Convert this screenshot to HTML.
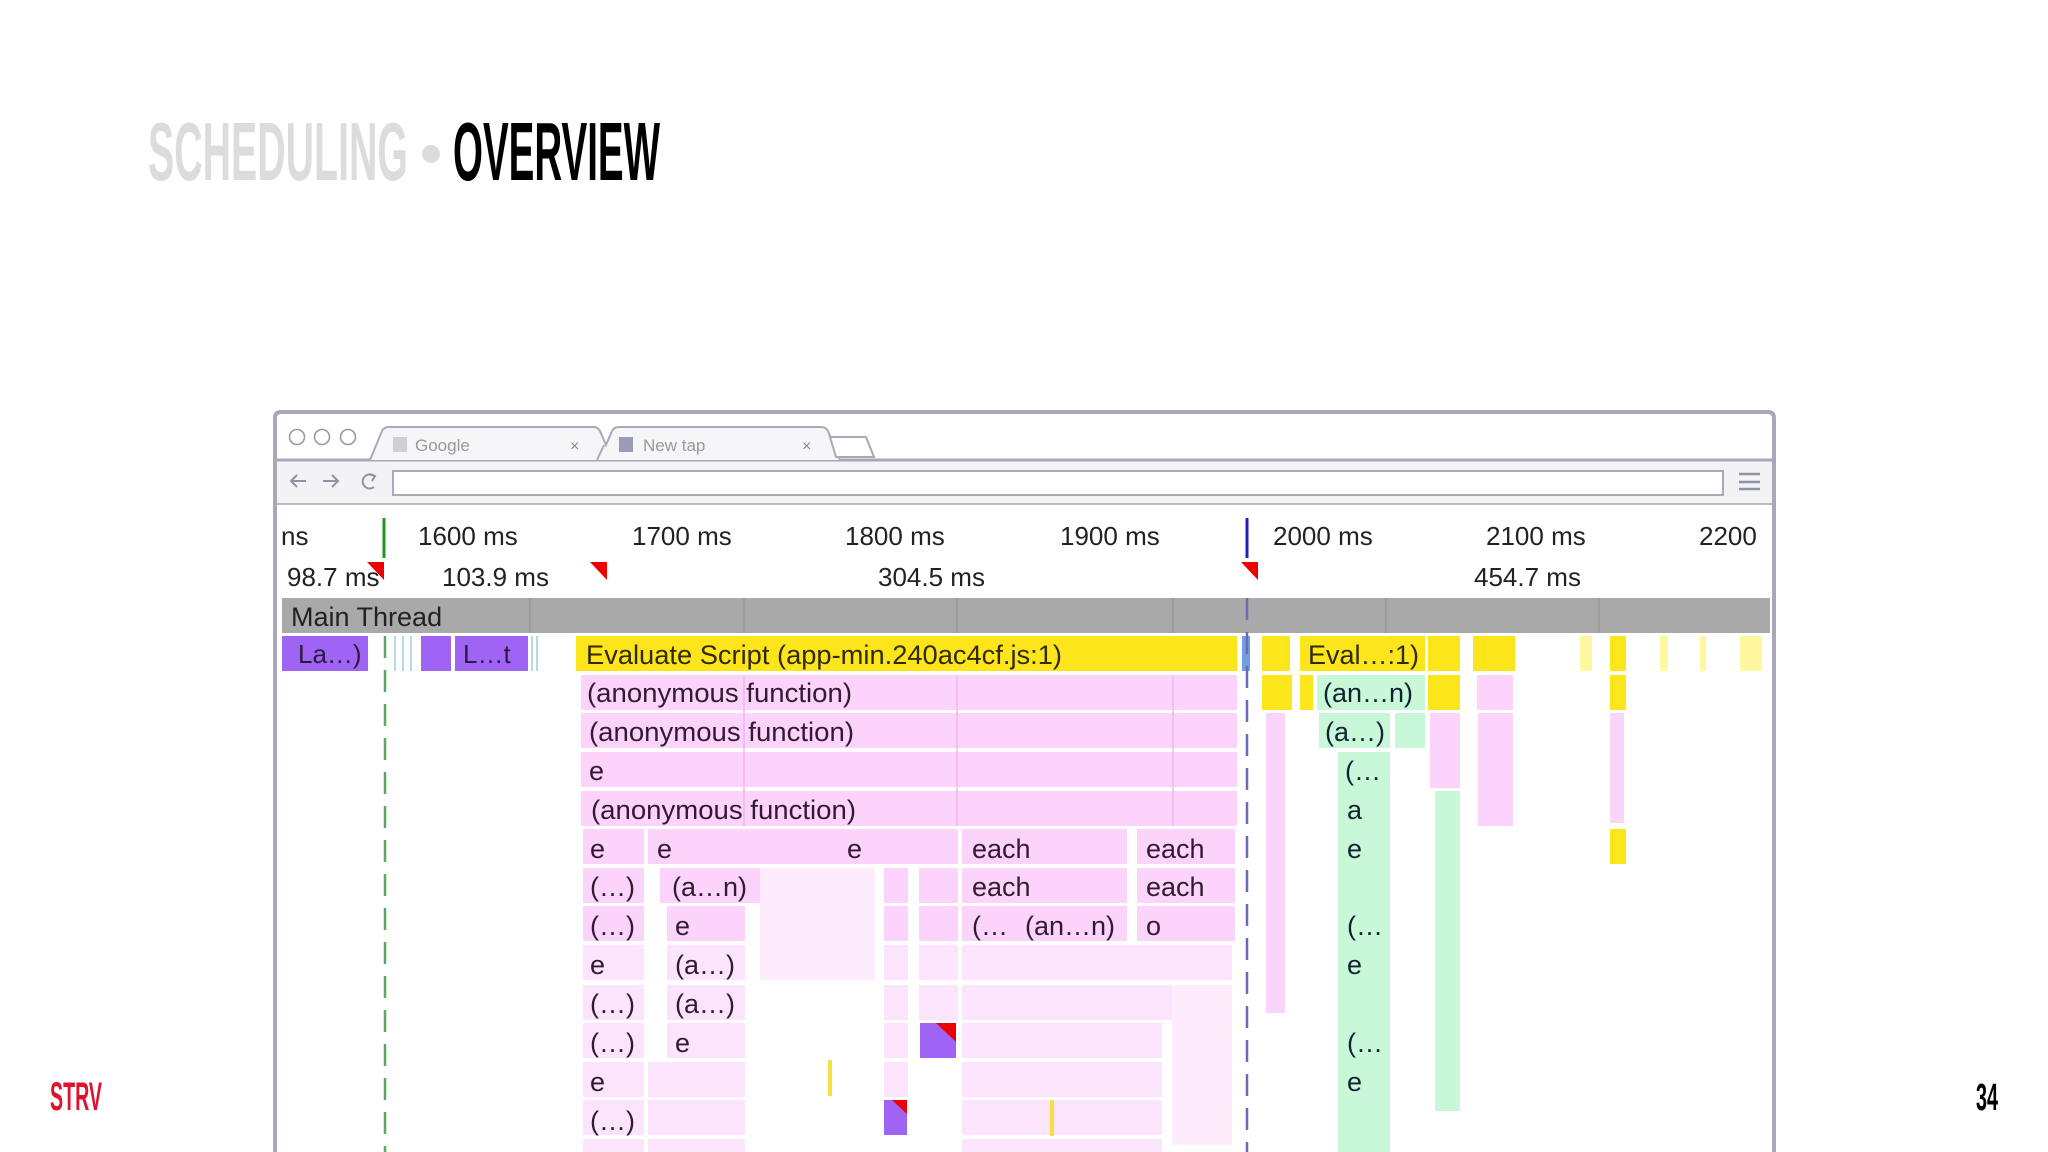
<!DOCTYPE html>
<html><head><meta charset="utf-8"><style>
html,body{margin:0;padding:0;background:#fff;width:2048px;height:1152px;overflow:hidden}
svg{display:block}
text{font-family:"Liberation Sans",sans-serif}
</style></head><body>
<svg width="2048" height="1152" viewBox="0 0 2048 1152" xmlns="http://www.w3.org/2000/svg">
<!-- Title -->
<text x="148" y="180" font-size="83" font-weight="bold" fill="#dcdcdc" textLength="260" lengthAdjust="spacingAndGlyphs" style="font-family:'Liberation Sans Narrow','Liberation Sans',sans-serif">SCHEDULING</text>
<circle cx="431" cy="154" r="9" fill="#dcdcdc"/>
<text x="453" y="180" font-size="83" font-weight="bold" fill="#000" textLength="207" lengthAdjust="spacingAndGlyphs" style="font-family:'Liberation Sans Narrow','Liberation Sans',sans-serif">OVERVIEW</text>
<text x="50" y="1110" font-size="40" font-weight="bold" fill="#e0102f" textLength="52" lengthAdjust="spacingAndGlyphs">STRV</text>
<text x="1976" y="1110" font-size="38" font-weight="bold" fill="#000" textLength="22" lengthAdjust="spacingAndGlyphs">34</text>

<!-- Browser -->
<path d="M275 1152 V418 Q275 412 281 412 H1768 Q1774 412 1774 418 V1152" fill="#fff" stroke="#a7a9b8" stroke-width="4"/>
<rect x="277" y="460" width="1495" height="43" fill="#f3f3f5"/>
<line x1="277" y1="460" x2="1772" y2="460" stroke="#a7a9b8" stroke-width="3"/>
<line x1="277" y1="504" x2="1772" y2="504" stroke="#b8bac6" stroke-width="2"/>
<circle cx="297" cy="437" r="7.5" fill="none" stroke="#9a9a9a" stroke-width="1.6"/>
<circle cx="322" cy="437" r="7.5" fill="none" stroke="#9a9a9a" stroke-width="1.6"/>
<circle cx="348" cy="437" r="7.5" fill="none" stroke="#9a9a9a" stroke-width="1.6"/>
<path d="M370 460 L382 431 Q384 427 389 427 H593 Q598 427 600 431 L606 445 L612 431 Q614 427 619 427 H821 Q826 427 828 431 L840 460" fill="#f6f6f8" stroke="#a7a9b8" stroke-width="2"/>
<path d="M604 445 L597 460" stroke="#a7a9b8" stroke-width="2" fill="none"/>
<path d="M836 457 L830 437 H866 L874 457 Z" fill="#fff" stroke="#a7a9b8" stroke-width="2"/>
<rect x="393" y="437" width="14" height="15" fill="#cfcfd4"/>
<text x="415" y="451" font-size="17" fill="#999">Google</text>
<text x="570" y="451" font-size="16" fill="#888">×</text>
<rect x="619" y="437" width="14" height="15" fill="#9a9cb5"/>
<text x="643" y="451" font-size="17" fill="#999">New tap</text>
<text x="802" y="451" font-size="16" fill="#888">×</text>
<g stroke="#8f92a6" stroke-width="2" fill="none">
<path d="M306 481 H291 M297 475 L291 481 L297 487"/>
<path d="M323 481 H338 M332 475 L338 481 L332 487"/>
<path d="M374 476 A7 7 0 1 0 374 487"/><path d="M370 474 L375 476 L372 481"/>
</g>
<rect x="393" y="471" width="1330" height="24" fill="#fff" stroke="#a9abb8" stroke-width="2"/>
<g stroke="#8f92a6" stroke-width="2.5"><line x1="1739" y1="474" x2="1760" y2="474"/><line x1="1739" y1="482" x2="1760" y2="482"/><line x1="1739" y1="489" x2="1760" y2="489"/></g>

<!-- Ruler -->
<g font-size="26" fill="#222">
<text x="281" y="545">ns</text>
<text x="418" y="545">1600 ms</text>
<text x="632" y="545">1700 ms</text>
<text x="845" y="545">1800 ms</text>
<text x="1060" y="545">1900 ms</text>
<text x="1273" y="545">2000 ms</text>
<text x="1486" y="545">2100 ms</text>
<text x="1699" y="545">2200</text>
<text x="287" y="586">98.7 ms</text>
<text x="442" y="586">103.9 ms</text>
<text x="878" y="586">304.5 ms</text>
<text x="1474" y="586">454.7 ms</text>
</g>
<line x1="384" y1="518" x2="384" y2="558" stroke="#1a9a1a" stroke-width="3"/>
<line x1="1247" y1="518" x2="1247" y2="558" stroke="#2222bb" stroke-width="3"/>
<path d="M367 562 L384 562 L384 580 Z" fill="#e00"/>
<path d="M590 562 L607 562 L607 580 Z" fill="#e00"/>
<path d="M1241 562 L1258 562 L1258 580 Z" fill="#e00"/>

<!-- Main thread -->
<rect x="282" y="598" width="1488" height="35" fill="#a9a9a9"/>
<g stroke="#999" stroke-width="1.5"><line x1="530" y1="598" x2="530" y2="633"/><line x1="744" y1="598" x2="744" y2="633"/><line x1="957" y1="598" x2="957" y2="633"/><line x1="1173" y1="598" x2="1173" y2="633"/><line x1="1386" y1="598" x2="1386" y2="633"/><line x1="1599" y1="598" x2="1599" y2="633"/></g>
<text x="291" y="626" font-size="27" fill="#222">Main Thread</text>

<!-- Row 0 -->
<rect x="282" y="636" width="86" height="35" fill="#a064f5"/>
<rect x="421" y="636" width="30" height="35" fill="#a064f5"/>
<rect x="455" y="636" width="73" height="35" fill="#a064f5"/>
<g stroke="#b9d9e0" stroke-width="2"><line x1="395" y1="636" x2="395" y2="671"/><line x1="403" y1="636" x2="403" y2="671"/><line x1="411" y1="636" x2="411" y2="671"/><line x1="532" y1="636" x2="532" y2="671"/><line x1="537" y1="636" x2="537" y2="671"/></g>
<rect x="576" y="636" width="661" height="35" fill="#fce51a"/>
<rect x="1262" y="636" width="28" height="35" fill="#fce51a"/>
<rect x="1300" y="636" width="125" height="35" fill="#fce51a"/>
<rect x="1428" y="636" width="32" height="35" fill="#fce51a"/>
<rect x="1473" y="636" width="42" height="35" fill="#fce51a"/>
<rect x="1242" y="636" width="8" height="35" fill="#6fa0e0"/>
<g fill="#fff6a0"><rect x="1580" y="636" width="12" height="35"/><rect x="1660" y="636" width="8" height="35"/><rect x="1700" y="636" width="6" height="35"/><rect x="1740" y="636" width="22" height="35"/></g>
<rect x="1610" y="636" width="16" height="35" fill="#fce51a"/>
<g font-size="26" fill="#2a1a40">
<text x="298" y="663">La…)</text>
<text x="463" y="663">L…t</text>
</g>
<text x="586" y="664" font-size="27" fill="#332900" textLength="476" lengthAdjust="spacingAndGlyphs">Evaluate Script (app-min.240ac4cf.js:1)</text>
<text x="1308" y="664" font-size="27" fill="#332900">Eval…:1)</text>

<!-- Big pink block rows 1-4 -->
<g fill="#fbd3fb">
<rect x="581" y="675" width="656" height="35"/>
<rect x="581" y="713" width="656" height="35"/>
<rect x="581" y="752" width="656" height="35"/>
<rect x="581" y="791" width="656" height="35"/>
<rect x="583" y="829" width="61" height="35"/><rect x="648" y="829" width="310" height="35"/><rect x="962" y="829" width="165" height="35"/><rect x="1137" y="829" width="98" height="35"/>
<rect x="583" y="868" width="61" height="35"/><rect x="660" y="868" width="100" height="35"/><rect x="884" y="868" width="24" height="35"/><rect x="919" y="868" width="39" height="35"/><rect x="962" y="868" width="165" height="35"/><rect x="1137" y="868" width="98" height="35"/>
<rect x="583" y="906" width="61" height="35"/><rect x="667" y="906" width="78" height="35"/><rect x="884" y="906" width="24" height="35"/><rect x="919" y="906" width="39" height="35"/><rect x="962" y="906" width="165" height="35"/><rect x="1137" y="906" width="98" height="35"/>
</g>
<g fill="#fde4fd">
<rect x="583" y="945" width="61" height="35"/><rect x="667" y="945" width="78" height="35"/><rect x="884" y="945" width="24" height="35"/><rect x="919" y="945" width="39" height="35"/><rect x="962" y="945" width="270" height="35"/>
<rect x="583" y="985" width="61" height="35"/><rect x="667" y="985" width="78" height="35"/><rect x="884" y="985" width="24" height="35"/><rect x="919" y="985" width="39" height="35"/><rect x="962" y="985" width="210" height="35"/>
<rect x="583" y="1023" width="61" height="35"/><rect x="667" y="1023" width="78" height="35"/><rect x="884" y="1023" width="24" height="35"/><rect x="962" y="1023" width="200" height="35"/>
<rect x="583" y="1062" width="61" height="35"/><rect x="648" y="1062" width="97" height="35"/><rect x="884" y="1062" width="24" height="35"/><rect x="962" y="1062" width="200" height="35"/>
<rect x="583" y="1100" width="61" height="35"/><rect x="648" y="1100" width="97" height="35"/><rect x="962" y="1100" width="200" height="35"/>
<rect x="583" y="1139" width="61" height="13"/><rect x="648" y="1139" width="97" height="13"/><rect x="962" y="1139" width="200" height="13"/>
</g>
<g fill="#fcecfc"><rect x="760" y="868" width="115" height="112"/><rect x="1172" y="985" width="60" height="160"/></g>
<g stroke="#f0b8f0" stroke-width="1.5"><line x1="744" y1="675" x2="744" y2="826"/><line x1="957" y1="675" x2="957" y2="826"/><line x1="1173" y1="675" x2="1173" y2="826"/></g>
<rect x="920" y="1023" width="36" height="35" fill="#a064f5"/><path d="M936 1023 H956 V1042 Z" fill="#e00"/>
<rect x="884" y="1100" width="23" height="35" fill="#a064f5"/><path d="M892 1100 H907 V1114 Z" fill="#e00"/>
<rect x="828" y="1060" width="4" height="36" fill="#f4e040"/>
<rect x="1050" y="1100" width="4" height="36" fill="#f4e040"/>

<g font-size="27" fill="#331a33">
<text x="587" y="702" textLength="265" lengthAdjust="spacingAndGlyphs">(anonymous function)</text>
<text x="589" y="741" textLength="265" lengthAdjust="spacingAndGlyphs">(anonymous function)</text>
<text x="589" y="780">e</text>
<text x="591" y="819" textLength="265" lengthAdjust="spacingAndGlyphs">(anonymous function)</text>
<text x="590" y="858">e</text><text x="657" y="858">e</text><text x="847" y="858">e</text><text x="972" y="858">each</text><text x="1146" y="858">each</text>
<text x="590" y="896">(…)</text><text x="672" y="896">(a…n)</text><text x="972" y="896">each</text><text x="1146" y="896">each</text>
<text x="590" y="935">(…)</text><text x="675" y="935">e</text><text x="972" y="935">(…</text><text x="1025" y="935">(an…n)</text><text x="1146" y="935">o</text>
<text x="590" y="974">e</text><text x="675" y="974">(a…)</text>
<text x="590" y="1013">(…)</text><text x="675" y="1013">(a…)</text>
<text x="590" y="1052">(…)</text><text x="675" y="1052">e</text>
<text x="590" y="1091">e</text>
<text x="590" y="1130">(…)</text>
</g>

<!-- Right side -->
<g fill="#fce51a"><rect x="1262" y="675" width="30" height="35"/><rect x="1300" y="675" width="13" height="35"/><rect x="1428" y="675" width="32" height="35"/><rect x="1610" y="675" width="16" height="35"/><rect x="1610" y="829" width="16" height="35"/></g>
<g fill="#fbd3fb"><rect x="1477" y="675" width="36" height="35"/><rect x="1266" y="713" width="19" height="300"/><rect x="1430" y="713" width="30" height="75"/><rect x="1478" y="713" width="35" height="113"/><rect x="1610" y="713" width="14" height="110"/></g>
<g fill="#c8f8d8"><rect x="1317" y="675" width="108" height="35"/><rect x="1319" y="713" width="71" height="35"/><rect x="1395" y="713" width="30" height="35"/><rect x="1338" y="752" width="52" height="400"/><rect x="1435" y="791" width="25" height="320"/></g>
<g font-size="27" fill="#123">
<text x="1323" y="702">(an…n)</text>
<text x="1325" y="741">(a…)</text>
<text x="1345" y="780">(…</text>
<text x="1347" y="819">a</text>
<text x="1347" y="858">e</text>
<text x="1347" y="935">(…</text>
<text x="1347" y="974">e</text>
<text x="1347" y="1052">(…</text>
<text x="1347" y="1091">e</text>
</g>

<!-- Dashed markers -->
<line x1="385" y1="636" x2="385" y2="1152" stroke="#5aa860" stroke-width="2.5" stroke-dasharray="22 12"/>
<line x1="1247" y1="598" x2="1247" y2="1152" stroke="#6a6ab8" stroke-width="2.5" stroke-dasharray="22 12"/>
</svg>
</body></html>
